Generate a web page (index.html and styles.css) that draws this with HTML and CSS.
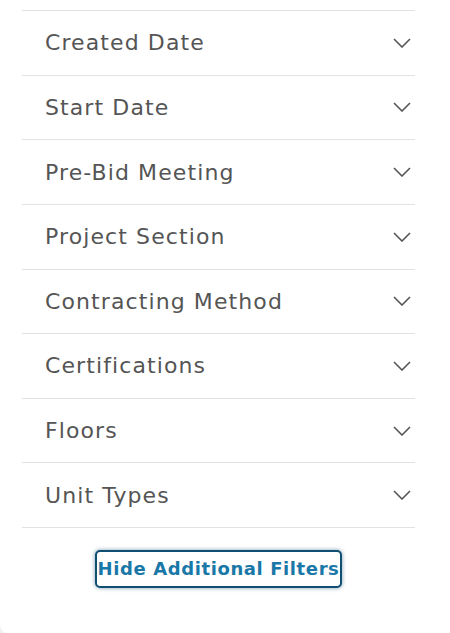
FILE: index.html
```html
<!DOCTYPE html>
<html lang="en">
<head>
    <meta charset="UTF-8">
    <meta name="viewport" content="width=device-width, initial-scale=1.0">
    <title>Filters</title>
    <link rel="stylesheet" href="styles.css">
</head>
<body>
    <div class="panel">
        <ul class="filter-list">
            <li class="filter-item"><span>Created Date</span><svg class="chevron" viewBox="0 0 18 10"><path d="M1 1l8 8 8-8"/></svg></li>
            <li class="filter-item"><span>Start Date</span><svg class="chevron" viewBox="0 0 18 10"><path d="M1 1l8 8 8-8"/></svg></li>
            <li class="filter-item"><span>Pre-Bid Meeting</span><svg class="chevron" viewBox="0 0 18 10"><path d="M1 1l8 8 8-8"/></svg></li>
            <li class="filter-item"><span>Project Section</span><svg class="chevron" viewBox="0 0 18 10"><path d="M1 1l8 8 8-8"/></svg></li>
            <li class="filter-item"><span>Contracting Method</span><svg class="chevron" viewBox="0 0 18 10"><path d="M1 1l8 8 8-8"/></svg></li>
            <li class="filter-item"><span>Certifications</span><svg class="chevron" viewBox="0 0 18 10"><path d="M1 1l8 8 8-8"/></svg></li>
            <li class="filter-item"><span>Floors</span><svg class="chevron" viewBox="0 0 18 10"><path d="M1 1l8 8 8-8"/></svg></li>
            <li class="filter-item"><span>Unit Types</span><svg class="chevron" viewBox="0 0 18 10"><path d="M1 1l8 8 8-8"/></svg></li>
        </ul>
        <div class="actions">
            <button class="toggle-btn">Hide Additional Filters</button>
        </div>
    </div>
</body>
</html>
```

FILE: styles.css
```css
body {
    margin: 0;
    background: #f1f1f1;
    font-family: "DejaVu Sans", Arial, sans-serif;
}

.panel {
    background: #fff;
    height: 633px;
    border-bottom-left-radius: 8px;
    padding: 10px 35px 0 22px;
    box-sizing: border-box;
}

.filter-list {
    list-style: none;
    margin: 0;
    padding: 0;
    border-bottom: 1px solid #e2e2e2;
}

.filter-item {
    display: flex;
    align-items: center;
    justify-content: space-between;
    height: 64.625px;
    box-sizing: border-box;
    border-top: 1px solid #e2e2e2;
    padding: 0 4px 0 23px;
    font-size: 22px;
    letter-spacing: 1.1px;
    color: #555;
}

.chevron {
    width: 18px;
    height: 10px;
    fill: none;
    stroke: #555;
    stroke-width: 1.6;
}

.actions {
    display: flex;
    justify-content: center;
    margin-top: 22px;
}

.toggle-btn {
    background: #fff;
    border: 2px solid #114f72;
    border-radius: 5px;
    box-shadow: 0 0 4px rgba(17, 79, 114, 0.55);
    padding: 6px 1px;
    font-family: "DejaVu Sans", Arial, sans-serif;
    font-weight: bold;
    font-size: 18px;
    letter-spacing: 0.6px;
    line-height: 22px;
    color: #1a78a8;
    cursor: pointer;
}
```
